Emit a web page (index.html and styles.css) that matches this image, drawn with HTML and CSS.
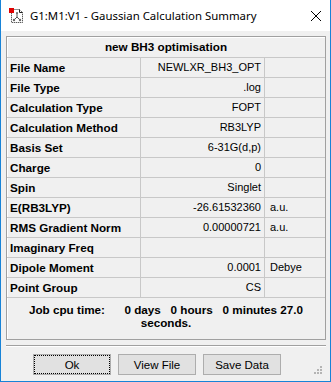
FILE: index.html
```html
<!DOCTYPE html>
<html lang="en">
<head>
    <meta charset="UTF-8">
    <title>G1:M1:V1 - Gaussian Calculation Summary</title>
    <link rel="stylesheet" href="styles.css">
</head>
<body>
    <div class="window">
        <div class="titlebar">
            <svg class="app-icon" width="16" height="16" viewBox="0 0 16 16">
                <path d="M2.5 1.5h8l3 3v10h-11z" fill="#fff" stroke="#222" stroke-dasharray="1 1"/>
                <path d="M10.5 1.5v3h3" fill="none" stroke="#222"/>
                <path d="M8 5v4M8 9l-3 3M8 9l3 3" stroke="#555" fill="none"/>
                <circle cx="8" cy="5" r="1" fill="#666"/>
                <circle cx="5" cy="12" r="1.2" fill="#666"/>
                <circle cx="11" cy="12" r="1.2" fill="#666"/>
                <rect x="0" y="0" width="5" height="5" fill="#e00000"/>
            </svg>
            <span class="title">G1:M1:V1 - Gaussian Calculation Summary</span>
            <svg class="close" width="10" height="10" viewBox="0 0 10 10">
                <path d="M0 0L10 10M10 0L0 10" stroke="#000" stroke-width="1"/>
            </svg>
        </div>

        <div class="content">
            <div class="panel">
                <div class="caption">new BH3 optimisation</div>
                <div class="row"><div class="key">File Name</div><div class="val">NEWLXR_BH3_OPT</div><div class="unit"></div></div>
                <div class="row"><div class="key">File Type</div><div class="val">.log</div><div class="unit"></div></div>
                <div class="row"><div class="key">Calculation Type</div><div class="val">FOPT</div><div class="unit"></div></div>
                <div class="row"><div class="key">Calculation Method</div><div class="val">RB3LYP</div><div class="unit"></div></div>
                <div class="row"><div class="key">Basis Set</div><div class="val">6-31G(d,p)</div><div class="unit"></div></div>
                <div class="row"><div class="key">Charge</div><div class="val">0</div><div class="unit"></div></div>
                <div class="row"><div class="key">Spin</div><div class="val">Singlet</div><div class="unit"></div></div>
                <div class="row"><div class="key">E(RB3LYP)</div><div class="val">-26.61532360</div><div class="unit">a.u.</div></div>
                <div class="row"><div class="key">RMS Gradient Norm</div><div class="val">0.00000721</div><div class="unit">a.u.</div></div>
                <div class="row"><div class="key">Imaginary Freq</div><div class="val"></div><div class="unit"></div></div>
                <div class="row"><div class="key">Dipole Moment</div><div class="val">0.0001</div><div class="unit">Debye</div></div>
                <div class="row"><div class="key">Point Group</div><div class="val">CS</div><div class="unit"></div></div>
                <div class="cpu">Job cpu time:      0 days   0 hours   0 minutes 27.0<br>seconds.</div>
            </div>

            <div class="separator"></div>

            <div class="buttons">
                <button type="button" class="btn default">Ok</button>
                <button type="button" class="btn">View File</button>
                <button type="button" class="btn">Save Data</button>
            </div>

            <svg class="grip" width="9" height="9" viewBox="0 0 9 9">
                <rect x="6" y="0" width="2" height="2" fill="#b4b4b4"/>
                <rect x="3" y="3" width="2" height="2" fill="#b4b4b4"/>
                <rect x="6" y="3" width="2" height="2" fill="#b4b4b4"/>
                <rect x="0" y="6" width="2" height="2" fill="#b4b4b4"/>
                <rect x="3" y="6" width="2" height="2" fill="#b4b4b4"/>
                <rect x="6" y="6" width="2" height="2" fill="#b4b4b4"/>
            </svg>
        </div>
    </div>
</body>
</html>
```

FILE: styles.css
```css
html, body {
    margin: 0;
    padding: 0;
    background: #fff;
}
.window {
    width: 331px;
    height: 382px;
    box-sizing: border-box;
    border: 1px solid #1883d7;
    border-top: none;
    background: #f0f0f0;
    display: flex;
    flex-direction: column;
    position: relative;
}
.titlebar {
    height: 31px;
    background: #fff;
    display: flex;
    align-items: center;
    padding-left: 8px;
    padding-right: 9px;
    flex-shrink: 0;
}
.app-icon {
    flex-shrink: 0;
    margin-top: 1px;
}
.title {
    margin-left: 5px;
    flex: 1;
    font-family: "Noto Sans", sans-serif;
    font-size: 11.4px;
    color: #000;
    white-space: nowrap;
}
.close {
    flex-shrink: 0;
    margin-top: 1px;
}
.content {
    padding: 5px 4px 0 5px;
    flex: 1;
}
.panel {
    width: 320px;
    box-sizing: border-box;
    border: 1px solid #a0a0a0;
    box-shadow: inset 1px 1px 0 #fff;
    font-family: "Liberation Sans", Arial, sans-serif;
    color: #000;
}
.caption {
    height: 20px;
    line-height: 20px;
    border-bottom: 1px solid #c8c8c8;
    text-align: center;
    font-weight: bold;
    font-size: 11.7px;
}
.row {
    display: grid;
    grid-template-columns: 134px 124px 60px;
    height: 20px;
    border-bottom: 1px solid #c8c8c8;
    box-sizing: border-box;
}
.key, .val, .unit {
    line-height: 19px;
    white-space: nowrap;
    overflow: hidden;
}
.key {
    border-right: 1px solid #c8c8c8;
    padding-left: 3px;
    font-weight: bold;
    font-size: 11.7px;
}
.val {
    border-right: 1px solid #c8c8c8;
    padding-right: 3px;
    text-align: right;
    font-size: 11px;
}
.unit {
    padding-left: 5px;
    font-size: 11px;
}
.cpu {
    height: 41px;
    box-sizing: border-box;
    padding-top: 5px;
    text-align: center;
    white-space: pre;
    font-weight: bold;
    font-size: 11.7px;
    line-height: 13px;
}
.separator {
    margin-top: 5px;
    width: 320px;
    height: 1px;
    background: #a0a0a0;
    border-bottom: 1px solid #fff;
}
.buttons {
    display: flex;
    gap: 7px;
    padding-left: 27px;
    margin-top: 7px;
}
.btn {
    width: 78px;
    height: 21px;
    box-sizing: border-box;
    background: #e1e1e1;
    border: 1px solid #adadad;
    font-family: "Liberation Sans", Arial, sans-serif;
    font-size: 11.5px;
    color: #000;
    padding: 0;
    cursor: pointer;
}
.btn.default {
    outline: 1px dotted #000;
    outline-offset: -2px;
}
.grip {
    position: absolute;
    right: 7px;
    bottom: 6px;
}
```
